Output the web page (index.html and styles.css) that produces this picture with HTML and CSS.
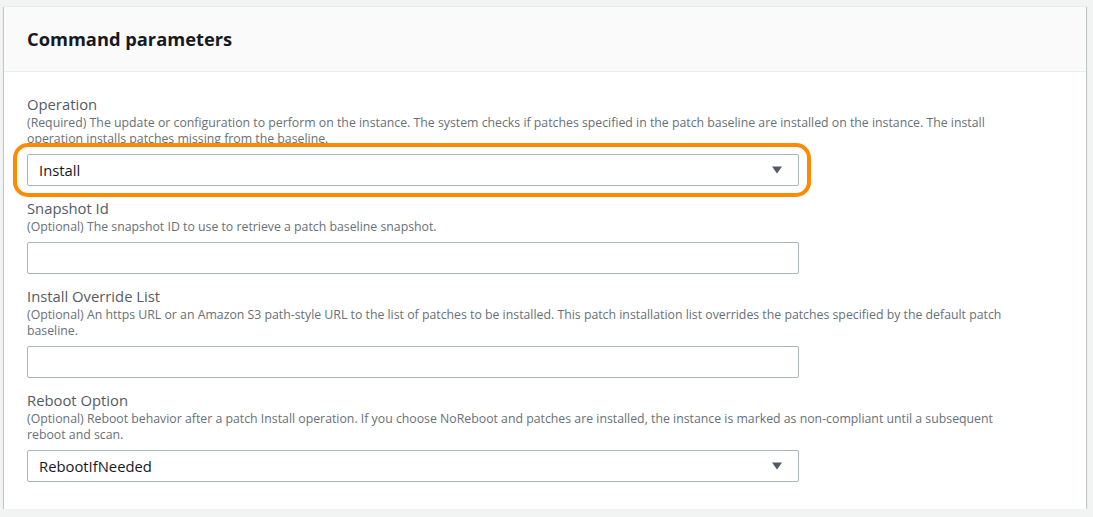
FILE: index.html
```html
<!DOCTYPE html>
<html lang="en">
<head>
<meta charset="utf-8">
<title>Command parameters</title>
<link rel="stylesheet" href="styles.css">
</head>
<body>
<div class="page">
  <section class="card">
    <header class="card-header">
      <h2 class="card-title">Command parameters</h2>
    </header>
    <div class="card-body">
      <div class="field">
        <div class="label">Operation</div>
        <div class="desc">(Required) The update or configuration to perform on the instance. The system checks if patches specified in the patch baseline are installed on the instance. The install operation installs patches missing from the baseline.</div>
        <div class="control highlighted">
          <div class="select">
            <span class="select-value">Install</span>
            <svg class="caret" width="10" height="8" viewBox="0 0 10 8"><path d="M0 0.5 H10 L5 7.5 Z" fill="#545b64"/></svg>
          </div>
        </div>
      </div>
      <div class="field">
        <div class="label">Snapshot Id</div>
        <div class="desc">(Optional) The snapshot ID to use to retrieve a patch baseline snapshot.</div>
        <div class="control">
          <input class="input" type="text">
        </div>
      </div>
      <div class="field">
        <div class="label">Install Override List</div>
        <div class="desc">(Optional) An https URL or an Amazon S3 path-style URL to the list of patches to be installed. This patch installation list overrides the patches specified by the default patch baseline.</div>
        <div class="control">
          <input class="input" type="text">
        </div>
      </div>
      <div class="field">
        <div class="label">Reboot Option</div>
        <div class="desc">(Optional) Reboot behavior after a patch Install operation. If you choose NoReboot and patches are installed, the instance is marked as non-compliant until a subsequent reboot and scan.</div>
        <div class="control">
          <div class="select">
            <span class="select-value">RebootIfNeeded</span>
            <svg class="caret" width="10" height="8" viewBox="0 0 10 8"><path d="M0 0.5 H10 L5 7.5 Z" fill="#545b64"/></svg>
          </div>
        </div>
      </div>
    </div>
  </section>
</div>
</body>
</html>
```
FILE: styles.css
```css
* { box-sizing: border-box; }

html, body {
  margin: 0;
  padding: 0;
  background: #f2f3f3;
  font-family: "Open Sans", "Noto Sans", sans-serif;
  color: #16191f;
}

.page {
  padding: 6px 7px 0 4px;
}

.card {
  background: #ffffff;
  border-top: 1px solid #eaeded;
  box-shadow: 0 1px 1px 0 rgba(0, 28, 36, 0.3),
              1px 1px 1px 0 rgba(0, 28, 36, 0.15),
              -1px 1px 1px 0 rgba(0, 28, 36, 0.15);
}

.card-header {
  background: #fafafa;
  border-bottom: 1px solid #eaeded;
  padding: 20px 23px;
}

.card-title {
  margin: 0;
  font-size: 18.3px;
  line-height: 24px;
  font-weight: 700;
  color: #16191f;
}

.card-body {
  padding: 22px 23px 27px;
  display: flex;
  flex-direction: column;
  gap: 12px;
}

.field {
  display: flex;
  flex-direction: column;
}

.label {
  font-size: 14.8px;
  line-height: 21px;
  color: #545b64;
}

.desc {
  max-width: 1000px;
  font-size: 12.3px;
  line-height: 16px;
  color: #687078;
  margin-bottom: 7px;
}

.control {
  width: 772px;
  position: relative;
}

.control.highlighted::before {
  content: "";
  position: absolute;
  top: -11px;
  left: -14px;
  right: -12px;
  bottom: -11px;
  background: #ffffff;
  border: 4px solid #ff8a00;
  border-radius: 15px;
}

.select,
.input {
  position: relative;
  display: flex;
  align-items: center;
  justify-content: space-between;
  width: 100%;
  height: 32px;
  margin: 0;
  padding: 0 16px 0 11px;
  border: 1px solid #aab7b8;
  border-radius: 2px;
  background: #ffffff;
  font-family: inherit;
  font-size: 14.8px;
  color: #16191f;
}

.select-value {
  line-height: 20px;
}

.caret {
  display: block;
}
```
